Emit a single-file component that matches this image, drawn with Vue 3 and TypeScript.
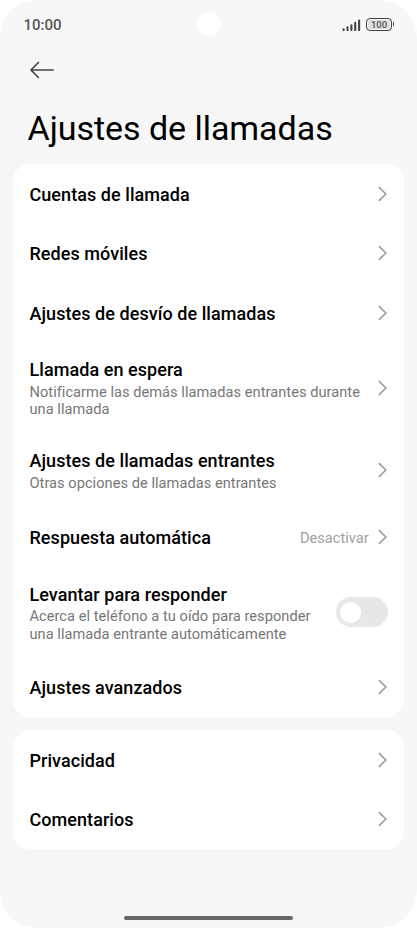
<script setup lang="ts">
import { ref } from 'vue'

interface Item {
  title: string
  lines?: string[]
  value?: string
  toggle?: boolean
}

const groups: Item[][] = [
  [
    { title: 'Cuentas de llamada' },
    { title: 'Redes móviles' },
    { title: 'Ajustes de desvío de llamadas' },
    { title: 'Llamada en espera', lines: ['Notificarme las demás llamadas entrantes durante', 'una llamada'] },
    { title: 'Ajustes de llamadas entrantes', lines: ['Otras opciones de llamadas entrantes'] },
    { title: 'Respuesta automática', value: 'Desactivar' },
    { title: 'Levantar para responder', lines: ['Acerca el teléfono a tu oído para responder', 'una llamada entrante automáticamente'], toggle: true },
    { title: 'Ajustes avanzados' },
  ],
  [{ title: 'Privacidad' }, { title: 'Comentarios' }],
]

const raiseToAnswer = ref(false)
</script>

<template>
  <div class="phone">
    <header class="status">
      <span class="time">10:00</span>
      <span class="camera"></span>
      <span class="indicators">
        <svg class="signal" width="19" height="12" viewBox="0 0 19 12">
          <path d="M1.6 11V10.2M5.5 11V8.4M9.4 11V6.2M13.2 11V3.9M17.1 11V1.6" />
        </svg>
        <span class="battery">100</span>
        <span class="battery-tip"></span>
      </span>
    </header>
    <button class="back" aria-label="Atrás">
      <svg width="24" height="18" viewBox="0 0 24 18">
        <path d="M23.2 9H1.2M8.4 1.5L1 9l7.4 7.5" />
      </svg>
    </button>
    <h1>Ajustes de llamadas</h1>
    <main class="groups">
      <section v-for="(items, g) in groups" :key="g" class="card">
        <div
          v-for="item in items"
          :key="item.title"
          class="row"
          :class="{ one: item.lines?.length === 1, two: item.lines?.length === 2 }"
        >
          <div class="text">
            <div class="title">{{ item.title }}</div>
            <div v-for="line in item.lines" :key="line" class="sub">{{ line }}</div>
          </div>
          <span v-if="item.value" class="value">{{ item.value }}</span>
          <button
            v-if="item.toggle"
            class="switch"
            :class="{ on: raiseToAnswer }"
            role="switch"
            :aria-checked="raiseToAnswer"
            @click="raiseToAnswer = !raiseToAnswer"
          >
            <span class="knob"></span>
          </button>
          <svg v-else class="chevron" width="10" height="16" viewBox="0 0 10 16">
            <path d="M0.9 1.1L7.9 8l-7 6.9" />
          </svg>
        </div>
      </section>
    </main>
    <footer class="home"><span class="bar"></span></footer>
  </div>
</template>

<style>
body {
  margin: 0;
  background: #fff;
}
</style>

<style scoped>
.phone {
  box-sizing: border-box;
  width: 417px;
  height: 928px;
  border-radius: 38px;
  background: #f7f7f7;
  font-family: Roboto, 'Liberation Sans', sans-serif;
  color: #000;
  display: flex;
  flex-direction: column;
  overflow: hidden;
}
button {
  border: 0;
  padding: 0;
  background: none;
}
svg {
  display: block;
  fill: none;
  flex: none;
}
.status {
  display: grid;
  grid-template-columns: 1fr 24px 1fr;
  align-items: center;
  height: 48px;
  padding: 0 23px;
}
.time {
  font-size: 15px;
  font-weight: 500;
  line-height: 18px;
  color: #555;
  padding: 2px 0 0 0.5px;
}
.camera {
  width: 24px;
  height: 24px;
  border-radius: 50%;
  background: #fff;
}
.indicators {
  display: flex;
  justify-content: flex-end;
  align-items: center;
}
.signal {
  stroke: #444;
  stroke-width: 2.1;
  stroke-linecap: round;
  margin: 1px 5px 0 0;
}
.battery {
  box-sizing: border-box;
  width: 26px;
  height: 13px;
  border: 1.4px solid #444;
  border-radius: 4px;
  box-shadow: inset 0 0 0 1px #f7f7f7;
  background: #dedede;
  color: #555;
  font-size: 9.5px;
  font-weight: 500;
  line-height: 12px;
  text-align: center;
}
.battery-tip {
  width: 1.5px;
  height: 4px;
  margin-left: 0.5px;
  border-radius: 0 1px 1px 0;
  background: #444;
}
.back {
  width: 24px;
  height: 18px;
  margin: 13px 0 0 30px;
}
.back path {
  stroke: #444;
  stroke-width: 1.7;
  stroke-linecap: round;
  stroke-linejoin: round;
}
h1 {
  margin: 28px 0 0 27.5px;
  font-size: 34px;
  font-weight: 400;
  line-height: 42px;
  letter-spacing: -0.04px;
  white-space: nowrap;
}
.groups {
  display: flex;
  flex-direction: column;
  gap: 13px;
  padding: 15px 12.6px 0 12.8px;
}
.card {
  border-radius: 17px;
  background: #fff;
}
.row {
  box-sizing: border-box;
  display: flex;
  align-items: center;
  height: 59.5px;
  padding: 0 16.8px 0 16.7px;
}
.row.one {
  height: 75px;
}
.row.two {
  height: 90.2px;
}
.text {
  flex: 1;
  white-space: nowrap;
  padding-top: 2px;
}
.title {
  font-size: 18px;
  font-weight: 500;
  line-height: 24px;
  letter-spacing: 0.06px;
}
.one .title,
.two .title {
  margin-top: -0.8px;
  padding-bottom: 1.4px;
}
.sub {
  font-size: 14.6px;
  line-height: 17.3px;
  letter-spacing: 0.045px;
  color: #777;
}
.value {
  font-size: 14.6px;
  color: #a0a0a0;
  padding-top: 1px;
  margin-right: 9px;
}
.chevron path {
  stroke: #999;
  stroke-width: 1.5;
}
.switch {
  display: flex;
  align-items: center;
  width: 52px;
  height: 30px;
  padding: 0 4px;
  border-radius: 15px;
  background: #e7e7e7;
}
.switch.on {
  justify-content: flex-end;
  background: #3482ff;
}
.knob {
  width: 21.5px;
  height: 21.5px;
  border-radius: 50%;
  background: #fff;
}
.home {
  display: flex;
  justify-content: center;
  margin-top: auto;
  padding-bottom: 8px;
}
.bar {
  width: 169px;
  height: 4px;
  border-radius: 2px;
  background: #666;
}
</style>
